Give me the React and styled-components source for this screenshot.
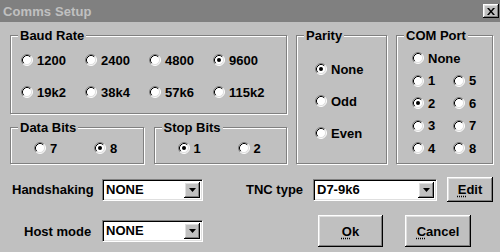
import React from "react";
import styled, { createGlobalStyle, css } from "styled-components";

const GlobalStyle = createGlobalStyle`
  html, body {
    margin: 0;
    padding: 0;
    background: #c0c0c0;
    overflow: hidden;
  }
  body {
    font-family: "Liberation Sans", Arial, sans-serif;
    font-size: 13px;
    font-weight: bold;
    color: #000;
  }
`;

const raised = css`
  background: #c0c0c0;
  box-shadow: inset -1px -1px 0 #000, inset 1px 1px 0 #fff,
    inset -2px -2px 0 #808080, inset 2px 2px 0 #dfdfdf;
`;

const baudRates = ["1200", "2400", "4800", "9600", "19k2", "38k4", "57k6", "115k2"];
const comPorts = ["1", "5", "2", "6", "3", "7", "4", "8"];

const RadioDot = ({ checked }) => (
  <svg width="12" height="12" viewBox="0 0 12 12">
    <circle cx="6" cy="6" r="5" fill="#fff" />
    <path d="M9.89 2.11 A5.5 5.5 0 0 0 2.11 9.89" fill="none" stroke="#808080" />
    <path d="M2.11 9.89 A5.5 5.5 0 0 0 9.89 2.11" fill="none" stroke="#fff" />
    <path d="M9.18 2.82 A4.5 4.5 0 0 0 2.82 9.18" fill="none" stroke="#000" />
    <path d="M2.82 9.18 A4.5 4.5 0 0 0 9.18 2.82" fill="none" stroke="#dfdfdf" />
    {checked && <circle cx="6" cy="6" r="2" fill="#000" />}
  </svg>
);

const Radio = ({ label, checked, span }) => (
  <RadioRow $span={span}>
    <RadioDot checked={checked} />
    <span>{label}</span>
  </RadioRow>
);

const App = () => {
  return (
    <>
      <GlobalStyle />
      <Window>
        <TitleBar>
          <Title>Comms Setup</Title>
          <CloseButton>
            <svg width="8" height="7" viewBox="0 0 8 7">
              <path d="M0 0h2l2 2.5 2-2.5h2L5 3.5 8 7H6L4 4.5 2 7H0l3-3.5z" fill="#000" />
            </svg>
          </CloseButton>
        </TitleBar>

        <Body>
          <TopGrid>
            <LeftColumn>
              <Group>
                <Legend>Baud Rate</Legend>
                <BaudBody>
                  {baudRates.map((b) => (
                    <Radio key={b} label={b} checked={b === "9600"} />
                  ))}
                </BaudBody>
              </Group>
              <BitsRow>
                <Group>
                  <Legend>Data Bits</Legend>
                  <BitsBody>
                    <Radio label="7" />
                    <Radio label="8" checked />
                  </BitsBody>
                </Group>
                <Group>
                  <Legend>Stop Bits</Legend>
                  <BitsBody>
                    <Radio label="1" checked />
                    <Radio label="2" />
                  </BitsBody>
                </Group>
              </BitsRow>
            </LeftColumn>

            <Group>
              <Legend>Parity</Legend>
              <ParityBody>
                <Radio label="None" checked />
                <Radio label="Odd" />
                <Radio label="Even" />
              </ParityBody>
            </Group>

            <Group>
              <Legend>COM Port</Legend>
              <ComBody>
                <Radio label="None" span />
                {comPorts.map((p) => (
                  <Radio key={p} label={p} checked={p === "2"} />
                ))}
              </ComBody>
            </Group>
          </TopGrid>

          <FormRow $top={13} $height={25}>
            <FieldLabel $indent={2}>Handshaking</FieldLabel>
            <Combo $w={101}>
              <ComboText>NONE</ComboText>
              <DropButton>
                <svg width="7" height="4" viewBox="0 0 7 4">
                  <path d="M0 0h7L3.5 4z" fill="#000" />
                </svg>
              </DropButton>
            </Combo>
            <TncLabel>TNC type</TncLabel>
            <Combo $w={124}>
              <ComboText>D7-9k6</ComboText>
              <DropButton>
                <svg width="7" height="4" viewBox="0 0 7 4">
                  <path d="M0 0h7L3.5 4z" fill="#000" />
                </svg>
              </DropButton>
            </Combo>
            <Button $w={46} $h={25} $gap={10}>
              <u>E</u>dit
            </Button>
          </FormRow>

          <FormRow $top={13} $height={32}>
            <FieldLabel $indent={14}>Host mode</FieldLabel>
            <Combo $w={101}>
              <ComboText>NONE</ComboText>
              <DropButton>
                <svg width="7" height="4" viewBox="0 0 7 4">
                  <path d="M0 0h7L3.5 4z" fill="#000" />
                </svg>
              </DropButton>
            </Combo>
            <Button $w={65} $h={32} $gap={115}>
              <u>O</u>k
            </Button>
            <Button $w={66} $h={32} $gap={22}>
              <u>C</u>ancel
            </Button>
          </FormRow>
        </Body>
      </Window>
    </>
  );
};

export default App;

// Styled Components
const Window = styled.div`
  width: 500px;
  height: 252px;
  background: #c0c0c0;
  display: flex;
  flex-direction: column;
`;

const TitleBar = styled.div`
  height: 22px;
  flex-shrink: 0;
  background: #808080;
  display: flex;
  align-items: center;
  justify-content: space-between;
  padding: 0 1px 0 3px;
  box-sizing: border-box;
`;

const Title = styled.span`
  color: #c0c0c0;
  font-size: 13px;
  letter-spacing: 0.1px;
`;

const CloseButton = styled.span`
  width: 16px;
  height: 14px;
  display: flex;
  align-items: center;
  justify-content: center;
  ${raised}
`;

const Body = styled.div`
  padding: 6px 0 0 10px;
  display: flex;
  flex-direction: column;
`;

const TopGrid = styled.div`
  display: grid;
  grid-template-columns: 277px 91px 97px;
  column-gap: 9px;
`;

const LeftColumn = styled.div`
  display: flex;
  flex-direction: column;
  gap: 6px;
`;

const BitsRow = styled.div`
  display: flex;
  gap: 10px;
  & > * {
    flex: 1;
  }
`;

const Group = styled.fieldset`
  margin: 0;
  padding: 0;
  min-width: 0;
  border: 1px solid #808080;
  box-shadow: inset 1px 1px 0 #fff, 1px 1px 0 #fff;
`;

const Legend = styled.legend`
  margin-left: 7px;
  padding: 0 2px;
  line-height: 15px;
  background: #c0c0c0;
`;

const BaudBody = styled.div`
  display: grid;
  grid-template-columns: repeat(4, 64px);
  grid-auto-rows: 32px;
  padding: 1px 0 5px 10px;
`;

const BitsBody = styled.div`
  display: grid;
  grid-template-columns: repeat(2, 60px);
  grid-auto-rows: 26px;
  padding: 0 0 2px 23px;
`;

const ParityBody = styled.div`
  display: grid;
  grid-auto-rows: 32px;
  padding: 10px 0 0 18px;
`;

const ComBody = styled.div`
  display: grid;
  grid-template-columns: repeat(2, 41px);
  grid-auto-rows: 22.5px;
  padding: 4px 0 0 15px;
`;

const RadioRow = styled.label`
  display: flex;
  align-items: center;
  gap: 4px;
  white-space: nowrap;
  grid-column: ${(p) => (p.$span ? "1 / -1" : "auto")};
`;

const FormRow = styled.div`
  display: flex;
  align-items: center;
  margin-top: ${(p) => p.$top}px;
  height: ${(p) => p.$height}px;
`;

const FieldLabel = styled.span`
  width: 92px;
  box-sizing: border-box;
  padding-left: ${(p) => p.$indent}px;
  white-space: nowrap;
`;

const TncLabel = styled.span`
  width: 67px;
  margin-left: 43px;
  white-space: nowrap;
`;

const Combo = styled.div`
  width: ${(p) => p.$w}px;
  height: 22px;
  box-sizing: border-box;
  display: flex;
  align-items: center;
  background: #fff;
  border: 1px solid;
  border-color: #808080 #fff #fff #808080;
  box-shadow: inset 1px 1px 0 #000, inset -1px -1px 0 #dfdfdf;
  padding: 2px;
`;

const ComboText = styled.span`
  flex: 1;
  line-height: 16px;
  padding-left: 1px;
`;

const DropButton = styled.span`
  width: 16px;
  height: 16px;
  display: flex;
  align-items: center;
  justify-content: center;
  ${raised}
`;

const Button = styled.button`
  width: ${(p) => p.$w}px;
  height: ${(p) => p.$h}px;
  margin-left: ${(p) => p.$gap}px;
  border: none;
  padding: 0;
  font: inherit;
  color: #000;
  ${raised}
  u {
    text-decoration-style: dotted;
    text-underline-offset: 2px;
  }
`;
